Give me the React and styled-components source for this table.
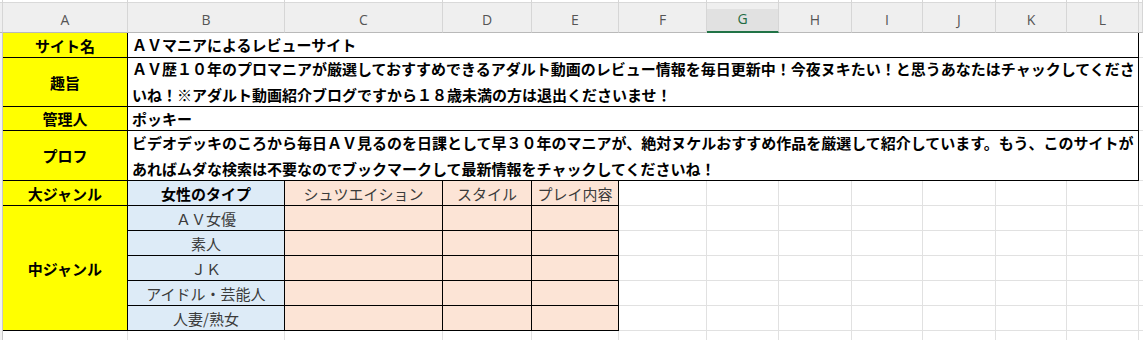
import React from 'react';
import styled, { createGlobalStyle, css } from 'styled-components';

const GlobalStyle = createGlobalStyle`
  html, body {
    margin: 0;
    padding: 0;
    background: #ffffff;
    overflow: hidden;
  }
`;

const COLUMNS = ['A', 'B', 'C', 'D', 'E', 'F', 'G', 'H', 'I', 'J', 'K', 'L'];

const Sheet = styled.div`
  display: grid;
  grid-template-columns: 3px 125px 157px 158px 89px 87px 88px 72px 73px 71px 73px 71px 72px 1fr;
  grid-template-rows: 33px 25px 49px 24px 50px 25px repeat(6, 25px);
  width: 1143px;
  font-family: 'Noto Sans CJK JP', 'Noto Sans', sans-serif;
  font-size: 15px;
  color: #000;
`;

const HeaderCell = styled.div`
  box-sizing: border-box;
  display: flex;
  align-items: center;
  justify-content: center;
  padding-top: 6px;
  font-family: 'Open Sans', 'Liberation Sans', sans-serif;
  font-size: 14px;
  color: #555;
  border-right: 1px solid #d6d6d6;
  border-bottom: 1px solid #b9b9b9;
  background: linear-gradient(#ffffff 0 2px, #d9d9d9 2px 3px, #efefef 3px);

  ${({ $selected }) =>
    $selected &&
    css`
      color: #1f6b43;
      border-bottom: 2px solid #217346;
      background: linear-gradient(#ffffff 0 2px, #d9d9d9 2px 3px, #efefef 3px 9px, #e1e1e1 9px);
    `}
`;

const Gutter = styled.div`
  box-sizing: border-box;
  background: #f2f2f2;
  border-right: 1px solid #c8c8c8;
`;

const Cell = styled.div`
  box-sizing: border-box;
  display: flex;
  flex-direction: column;
  justify-content: center;
  align-items: ${({ $align }) => ($align === 'left' ? 'flex-start' : 'center')};
  padding-left: ${({ $align }) => ($align === 'left' ? '4px' : '0')};
  grid-column: span ${({ $span }) => $span || 1};
  grid-row: span ${({ $rows }) => $rows || 1};
  background: ${({ $bg }) => $bg || '#ffffff'};
  color: ${({ $color }) => $color || '#000'};
  font-weight: ${({ $bold }) => ($bold ? 700 : 400)};
  border-right: 1px solid ${({ $ruled }) => ($ruled ? '#000' : '#e1e1e1')};
  border-bottom: 1px solid ${({ $ruled }) => ($ruled ? '#000' : '#e1e1e1')};
  white-space: nowrap;
  overflow: hidden;
`;

const Line = styled.span`
  display: block;
  line-height: 26px;
`;

const Filler = styled.div`
  border-bottom: 1px solid #e1e1e1;
`;

const YELLOW = '#ffff00';
const BLUE = '#ddebf7';
const PEACH = '#fce4d6';
const SOFT = '#3b3b3b';

const infoRows = [
  { label: 'サイト名', lines: ['ＡＶマニアによるレビューサイト'] },
  {
    label: '趣旨',
    lines: [
      'ＡＶ歴１０年のプロマニアが厳選しておすすめできるアダルト動画のレビュー情報を毎日更新中！今夜ヌキたい！と思うあなたはチャックしてくださ',
      'いね！※アダルト動画紹介ブログですから１８歳未満の方は退出くださいませ！',
    ],
  },
  { label: '管理人', lines: ['ポッキー'] },
  {
    label: 'プロフ',
    lines: [
      'ビデオデッキのころから毎日ＡＶ見るのを日課として早３０年のマニアが、絶対ヌケルおすすめ作品を厳選して紹介しています。もう、このサイトが',
      'あればムダな検索は不要なのでブックマークして最新情報をチャックしてくださいね！',
    ],
  },
];

const subGenres = ['ＡＶ女優', '素人', 'ＪＫ', 'アイドル・芸能人', '人妻/熟女'];
const blankColumns = ['F', 'G', 'H', 'I', 'J', 'K', 'L'];

const App = () => (
  <>
    <GlobalStyle />
    <Sheet>
      <HeaderCell />
      {COLUMNS.map((letter) => (
        <HeaderCell key={letter} $selected={letter === 'G'}>
          {letter}
        </HeaderCell>
      ))}
      <HeaderCell />

      {infoRows.map((row) => (
        <React.Fragment key={row.label}>
          <Gutter />
          <Cell $bg={YELLOW} $bold $ruled>
            {row.label}
          </Cell>
          <Cell $span={11} $align="left" $bold $ruled>
            {row.lines.map((text) => (
              <Line key={text}>{text}</Line>
            ))}
          </Cell>
          <Filler />
        </React.Fragment>
      ))}

      <Gutter />
      <Cell $bg={YELLOW} $bold $ruled>
        大ジャンル
      </Cell>
      <Cell $bg={BLUE} $bold $ruled>
        女性のタイプ
      </Cell>
      <Cell $bg={PEACH} $color={SOFT} $ruled>
        シュツエイション
      </Cell>
      <Cell $bg={PEACH} $color={SOFT} $ruled>
        スタイル
      </Cell>
      <Cell $bg={PEACH} $color={SOFT} $ruled>
        プレイ内容
      </Cell>
      {blankColumns.map((c) => (
        <Cell key={c} />
      ))}
      <Filler />

      {subGenres.map((genre, i) => (
        <React.Fragment key={genre}>
          <Gutter />
          {i === 0 && (
            <Cell $bg={YELLOW} $bold $ruled $rows={5}>
              中ジャンル
            </Cell>
          )}
          <Cell $bg={BLUE} $color={SOFT} $ruled>
            {genre}
          </Cell>
          <Cell $bg={PEACH} $ruled />
          <Cell $bg={PEACH} $ruled />
          <Cell $bg={PEACH} $ruled />
          {blankColumns.map((c) => (
            <Cell key={c} />
          ))}
          <Filler />
        </React.Fragment>
      ))}

      <Gutter />
      {COLUMNS.map((c) => (
        <Cell key={c} />
      ))}
      <Filler />
    </Sheet>
  </>
);

export default App;
